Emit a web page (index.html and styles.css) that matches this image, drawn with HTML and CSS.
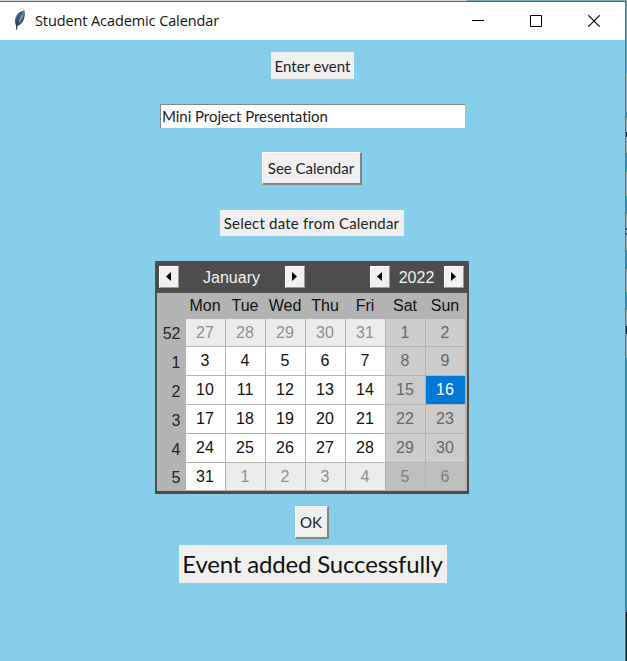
FILE: index.html
```html
<!DOCTYPE html>
<html lang="en">
<head>
<meta charset="utf-8">
<title>Student Academic Calendar</title>
<link rel="stylesheet" href="styles.css">
</head>
<body>
<div class="desktop">
<main class="window">
  <header class="titlebar">
    <svg class="feather" width="14" height="20" viewBox="0 0 14 20">
      <path d="M3.500 19 3.300 16C.8 12 2.200 5.500 6 2.700 8 1.200 10 .8 11.500.5c.8 4 .2 9-2.400 12.200C7.600 14.500 6 15.300 4.200 16z" fill="#35536f"/>
      <path d="M5 13C4.500 9 6 4.500 10.500 1.500 11 5 9.500 9 6.500 12z" fill="#7fa6cc"/>
      <path d="M3.500 19.500C4 13 6 7.500 9.500 3" fill="none" stroke="#182430" stroke-width="1"/>
      <path d="M2 9l2-4M8 14l2-3" stroke="#9aa7b2" stroke-width=".8"/>
    </svg>
    <h1 class="title">Student Academic Calendar</h1>
    <div class="controls">
      <svg width="12" height="12" viewBox="0 0 12 12"><path d="M0 5.500h12" stroke="#000"/></svg>
      <svg width="12" height="12" viewBox="0 0 12 12"><path d="M.5.5h11v11H.5z" fill="none" stroke="#000"/></svg>
      <svg width="12" height="12" viewBox="0 0 12 12"><path d="M.3.3l11.400 11.400M11.700.3.3 11.700" stroke="#000" stroke-width="1.100"/></svg>
    </div>
  </header>
  <section class="content">
    <div class="label enter"><span>Enter event</span></div>
    <div class="entry"><span>Mini Project Presentation</span></div>
    <div class="button see"><span>See Calendar</span></div>
    <div class="label select"><span>Select date from Calendar</span></div>
    <div class="calendar">
      <div class="cal-head">
        <div class="arrow"><svg width="5" height="9" viewBox="0 0 5 9"><path d="M5 0v9L0 4.500z"/></svg></div>
        <div class="month">January</div>
        <div class="arrow"><svg width="5" height="9" viewBox="0 0 5 9"><path d="M0 0v9l5-4.500z"/></svg></div>
        <div class="gap"></div>
        <div class="arrow"><svg width="5" height="9" viewBox="0 0 5 9"><path d="M5 0v9L0 4.500z"/></svg></div>
        <div class="year">2022</div>
        <div class="arrow"><svg width="5" height="9" viewBox="0 0 5 9"><path d="M0 0v9l5-4.500z"/></svg></div>
      </div>
      <div class="grid">
        <b></b><b>Mon</b><b>Tue</b><b>Wed</b><b>Thu</b><b>Fri</b><b>Sat</b><b>Sun</b>
        <em>52</em><i class="out">27</i><i class="out">28</i><i class="out">29</i><i class="out">30</i><i class="out">31</i><i class="we">1</i><i class="we">2</i>
        <em>1</em><i>3</i><i>4</i><i>5</i><i>6</i><i>7</i><i class="we">8</i><i class="we">9</i>
        <em>2</em><i>10</i><i>11</i><i>12</i><i>13</i><i>14</i><i class="we">15</i><i class="sel">16</i>
        <em>3</em><i>17</i><i>18</i><i>19</i><i>20</i><i>21</i><i class="we">22</i><i class="we">23</i>
        <em>4</em><i>24</i><i>25</i><i>26</i><i>27</i><i>28</i><i class="we">29</i><i class="we">30</i>
        <em>5</em><i>31</i><i class="out">1</i><i class="out">2</i><i class="out">3</i><i class="out">4</i><i class="we-out">5</i><i class="we-out">6</i>
      </div>
    </div>
    <div class="button ok"><span>OK</span></div>
    <div class="label success"><span>Event added Successfully</span></div>
  </section>
</main>
</div>
</body>
</html>
```
FILE: styles.css
```css
* { box-sizing: border-box; }
body { margin: 0; overflow: hidden; }
.desktop {
  width: 627px;
  height: 661px;
  padding: 1px 1px 0 0;
  background:
    linear-gradient(90deg, #d6d6d6 467px, #70aabc 467px) 0 0 / 627px 1px no-repeat,
    linear-gradient(#65a3b7 0 74px, #aaa 74px 112px, #438da8 112px 118px, #aaa 118px 132px, #222 132px 137px, #aaa 137px 153px, #438da8 153px 172px, #aaa 172px 196px, #438da8 196px 214px, #aaa 214px 228px, #444 228px 230px, #aaa 230px 233px, #444 233px 235px, #aaa 235px 250px, #438da8 250px 269px, #aaa 269px 292px, #438da8 292px 310px, #aaa 310px 326px, #222 326px 334px, #aaa 334px 358px, #438da8 358px 612px, #0d161a 612px) 626px 0 / 1px 661px no-repeat;
}
.window {
  height: 660px;
  border-top: 1px solid #52636a;
  border-right: 1px solid #477d90;
  background: #87ceeb;
}
.titlebar {
  display: flex;
  align-items: center;
  height: 38px;
  padding: 0 24px 0 13px;
  background: #fff;
}
.feather { margin-top: -2px; }
.title {
  margin: 0 auto 0 8px;
  font: 400 14.5px/20px "Open Sans", sans-serif;
  letter-spacing: -.1px;
  color: #111;
  white-space: nowrap;
}
.controls { display: flex; gap: 46px; padding-right: 1px; }
.controls svg { display: block; }
.content {
  display: flex;
  flex-direction: column;
  align-items: center;
  font-family: Lato, sans-serif;
  font-variant-ligatures: none;
  color: #222;
}
.label, .button, .entry {
  display: flex;
  align-items: center;
  justify-content: center;
  background: #f0f0f0;
  font-size: 15px;
  white-space: nowrap;
}
.enter { width: 83px; height: 27px; margin-top: 12px; }
.entry {
  justify-content: flex-start;
  width: 305px;
  height: 24px;
  margin-top: 25px;
  padding: 0 0 2px 1px;
  background: #fff;
  border-top: 1px solid #858585;
  border-left: 1px solid #858585;
  letter-spacing: -.04px;
}
.button { border: 1px solid #fff; border-right: 2px solid #858585; border-bottom: 2px solid #858585; }
.see { width: 100px; height: 33px; margin: 24px 2px 0 0; }
.select { width: 184px; height: 26px; margin: 25px 2px 0 0; letter-spacing: .2px; }
.calendar {
  width: 314px;
  height: 233px;
  margin: 25px 2px 0 0;
  border: 2px solid #4d4d4d;
  border-bottom-width: 3px;
  font: 400 16px/20px "Liberation Sans", sans-serif;
}
.cal-head {
  display: flex;
  align-items: center;
  height: 30px;
  padding: 0 2px 1px;
  background: #4d4d4d;
  color: #f2f2f2;
  text-align: center;
}
.arrow {
  display: flex;
  align-items: center;
  justify-content: center;
  width: 20px;
  height: 22px;
  margin-top: -2px;
  background: #f0f0f0;
  border: 1px solid #fff;
  border-right-color: #999;
  border-bottom-color: #999;
}
.month { width: 106px; }
.gap { width: 65px; }
.year { width: 54px; }
.grid {
  display: grid;
  grid-template-columns: 29px repeat(7, 40px);
  grid-template-rows: 26px 28px 29px 29px 29px 29px 28px;
  height: 198px;
  background: #b3b3b3;
}
.grid b, .grid em, .grid i {
  display: flex;
  align-items: center;
  justify-content: center;
  font-weight: 400;
  font-style: normal;
  color: #111;
}
.grid b { padding-right: 1px; }
.grid em { justify-content: flex-end; padding: 2px 5px 0 0; color: #222; }
.grid i { background: #fff; border-right: 1px solid #b3b3b3; border-bottom: 1px solid #b3b3b3; }
.grid i.out { background: #ececec; color: #8f8f8f; }
.grid i.we { background: #ccc; color: #666; }
.grid i.we-out { background: #bfbfbf; color: #7d7d7d; }
.grid i.sel { background: #0078d7; color: #fff; }
.ok { width: 34px; height: 33px; margin: 12px 2px 0 0; }
.success { width: 268px; height: 38px; margin-top: 6px; padding-bottom: 2px; font-size: 24px; letter-spacing: -.18px; color: #111; }
```
